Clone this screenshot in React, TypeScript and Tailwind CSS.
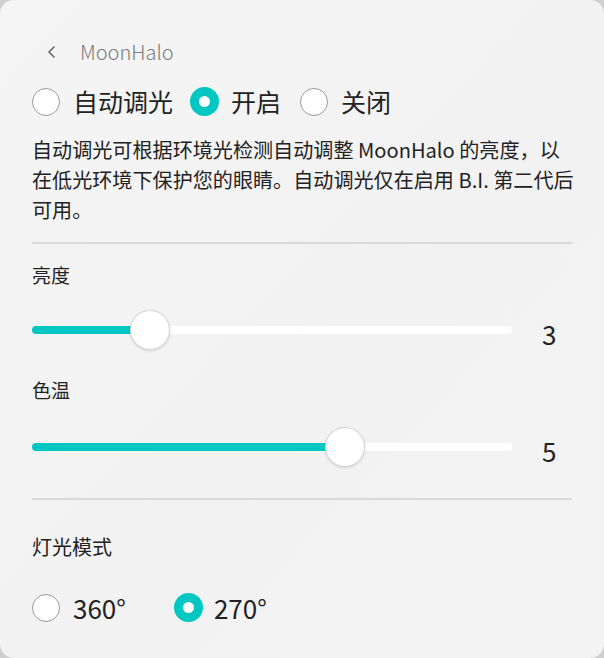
import React from "react";

const font = { fontFamily: '"Noto Sans CJK SC", "Noto Sans", sans-serif' };

function Radio({ checked }: { checked: boolean }) {
  return checked ? (
    <span className="flex h-[29px] w-[29px] shrink-0 items-center justify-center rounded-full bg-[#00c7c1]">
      <span className="block h-[11px] w-[11px] rounded-full bg-white" />
    </span>
  ) : (
    <span className="block h-[28px] w-[28px] shrink-0 rounded-full border border-[#9a9a9a] bg-white" />
  );
}

function Slider({ thumb, value }: { thumb: number; value: string }) {
  return (
    <div className="flex h-[40px] items-center">
      <div className="relative h-[40px] w-[480px]">
        <div className="absolute left-0 right-0 top-[16px] h-[8px] rounded-full bg-white" />
        <div
          className="absolute left-0 top-[16px] h-[8px] rounded-full bg-[#00c7c1]"
          style={{ width: thumb + 20 }}
        />
        <div
          className="absolute top-0 h-[40px] w-[40px] rounded-full border border-[#d4d4d4] bg-white shadow-[0_1px_3px_rgba(0,0,0,0.12)]"
          style={{ left: thumb }}
        />
      </div>
      <span className="ml-[30px] mt-[8px] text-[26px] leading-none text-[#222]">{value}</span>
    </div>
  );
}

export default function App() {
  return (
    <div className="h-[658px] w-[604px] bg-[#cfcfcf]" style={font}>
      <div className="flex h-full w-full flex-col rounded-[14px] bg-gradient-to-br from-[#f5f5f5] via-[#f2f2f2] to-[#f3f3f3] px-[32px] pt-[38px] text-[#222]">
        <div className="flex h-[28px] items-center pl-[14px]">
          <svg width="12" height="14" viewBox="0 0 12 14" fill="none">
            <path d="M8 2 L3 7 L8 12" stroke="#666" strokeWidth="1.6" strokeLinecap="round" strokeLinejoin="round" />
          </svg>
          <span className="ml-[22px] text-[20px] font-light leading-none text-[#7a7a7a]">MoonHalo</span>
        </div>
        <div className="mt-[21px] flex h-[29px] items-center">
          <Radio checked={false} />
          <span className="ml-[13px] text-[25px] leading-none">自动调光</span>
          <span className="ml-[17px] block"><Radio checked={true} /></span>
          <span className="ml-[12px] text-[25px] leading-none">开启</span>
          <span className="ml-[19px] block"><Radio checked={false} /></span>
          <span className="ml-[13px] text-[25px] leading-none">关闭</span>
        </div>
        <p className="-mr-[20px] mt-[19px] whitespace-nowrap text-[20.1px] leading-[30px] text-[#222]">
          自动调光可根据环境光检测自动调整 MoonHalo 的亮度，以
          <br />
          在低光环境下保护您的眼睛。自动调光仅在启用 B.I. 第二代后
          <br />
          可用。
        </p>
        <div className="mt-[17px] h-[2px] w-full bg-[#dadada]" />
        <div className="mt-[18px] text-[19px] leading-[26px]">亮度</div>
        <div className="mt-[22px]">
          <Slider thumb={98} value="3" />
        </div>
        <div className="mt-[27px] text-[19px] leading-[26px]">色温</div>
        <div className="mt-[24px]">
          <Slider thumb={293} value="5" />
        </div>
        <div className="mt-[31px] h-[2px] w-full bg-[#dadada]" />
        <div className="mt-[34px] text-[20px] leading-[26px]">灯光模式</div>
        <div className="mt-[33px] flex h-[29px] items-center">
          <Radio checked={false} />
          <span className="ml-[13px] text-[26px] leading-none">360°</span>
          <span className="ml-[48px] block"><Radio checked={true} /></span>
          <span className="ml-[11px] text-[26px] leading-none">270°</span>
        </div>
      </div>
    </div>
  );
}
